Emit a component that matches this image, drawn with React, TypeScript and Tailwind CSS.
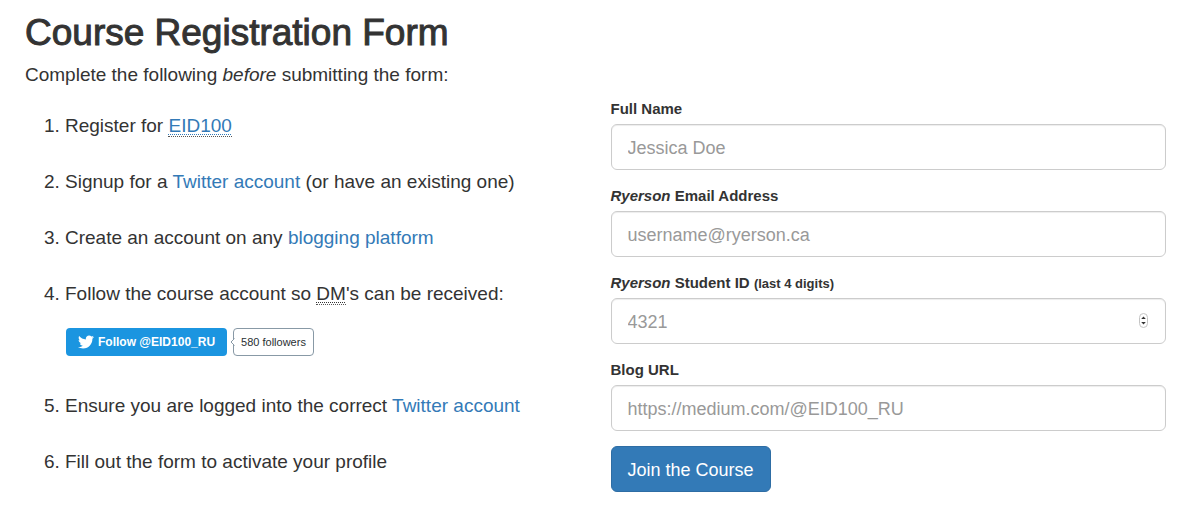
import type { ReactNode } from "react";
import { FaTwitter } from "react-icons/fa";

const linkClass = "text-[#337ab7] hover:underline";

function Abbr({ title, children }: { title: string; children: ReactNode }) {
  return (
    <abbr
      title={title}
      className="cursor-help border-b border-dotted border-[#555] underline decoration-dotted decoration-1 underline-offset-2"
    >
      {children}
    </abbr>
  );
}

interface FieldProps {
  id: string;
  label: ReactNode;
  type: string;
  placeholder: string;
}

function Field({ id, label, type, placeholder }: FieldProps) {
  return (
    <div className="flex flex-col">
      <label htmlFor={id} className="mb-[5px] text-[15px] leading-[21px] font-bold">
        {label}
      </label>
      <div className="relative">
        <input
          id={id}
          type={type}
          placeholder={placeholder}
          className="block h-[46px] w-full appearance-none rounded-md border border-[#ccc] bg-white px-4 pt-[2px] text-[18px] text-[#555] shadow-[inset_0_1px_1px_rgba(0,0,0,0.075)] outline-none [appearance:textfield] placeholder:text-[#999] focus:border-[#66afe9] [&::-webkit-inner-spin-button]:appearance-none"
        />
        {type === "number" && (
          <svg
            aria-hidden="true"
            viewBox="0 0 9 15"
            className="pointer-events-none absolute top-[15px] right-[18px] h-[15px] w-[9px]"
          >
            <rect x="0.5" y="0.5" width="8" height="14" rx="4" fill="#fff" stroke="#c4c4c4" />
            <path d="M2.2 6 4.5 3.4 6.8 6ZM2.2 9 4.5 11.6 6.8 9Z" fill="#333" />
          </svg>
        )}
      </div>
    </div>
  );
}

function FollowButton() {
  return (
    <div className="flex items-center pl-px">
      <a
        href="#follow"
        className="flex h-7 items-center gap-1 rounded bg-[#1b95e0] px-3 text-[12px] font-bold text-white"
      >
        <FaTwitter className="size-4" aria-hidden="true" />
        Follow @EID100_RU
      </a>
      <a
        href="#followers"
        className="relative ml-[6px] flex h-7 items-center rounded border border-[#8899a6] bg-white px-[7px] text-[11px] text-[#292f33]"
      >
        <svg
          aria-hidden="true"
          viewBox="0 0 5 8"
          className="absolute top-[9px] -left-1 h-2 w-[5px]"
        >
          <path d="M5 0 1 4 5 8Z" fill="#fff" />
          <path d="M4.5 0.5 1 4 4.5 7.5" fill="none" stroke="#8899a6" />
        </svg>
        580 followers
      </a>
    </div>
  );
}

export default function App() {
  return (
    <main className="bg-white pt-[13px] pr-[19px] pb-6 pl-[25px] font-['Liberation_Sans',Arial,sans-serif] text-[19px] leading-7 text-[#333]">
      <h1 className="text-[37px] leading-10 [-webkit-text-stroke:1px_#333]">
        Course Registration Form
      </h1>
      <p className="mt-2">
        Complete the following <em>before</em> submitting the form:
      </p>
      <div className="mt-[9px] grid grid-cols-2 gap-x-[30px]">
        <ol className="flex list-decimal flex-col gap-7 pt-[14px] pl-10">
          <li>
            Register for{" "}
            <a href="#eid100" className="text-[#337ab7]">
              <Abbr title="Course EID100">EID100</Abbr>
            </a>
          </li>
          <li>
            Signup for a{" "}
            <a href="#twitter-signup" className={linkClass}>
              Twitter account
            </a>{" "}
            (or have an existing one)
          </li>
          <li>
            Create an account on any{" "}
            <a href="#blogging" className={linkClass}>
              blogging platform
            </a>
          </li>
          <li>
            Follow the course account so <Abbr title="Direct Message">DM</Abbr>'s can be received:
            <div className="pt-5 pb-2">
              <FollowButton />
            </div>
          </li>
          <li>
            Ensure you are logged into the correct{" "}
            <a href="#twitter" className={linkClass}>
              Twitter account
            </a>
          </li>
          <li>Fill out the form to activate your profile</li>
        </ol>
        <form className="flex flex-col gap-[15px]">
          <Field id="name" type="text" label="Full Name" placeholder="Jessica Doe" />
          <Field
            id="email"
            type="email"
            label={
              <>
                <em>Ryerson</em> Email Address
              </>
            }
            placeholder="username@ryerson.ca"
          />
          <Field
            id="student-id"
            type="number"
            label={
              <>
                <em>Ryerson</em> Student ID{" "}
                <small className="text-[13px] leading-none">(last 4 digits)</small>
              </>
            }
            placeholder="4321"
          />
          <Field id="blog" type="url" label="Blog URL" placeholder="https://medium.com/@EID100_RU" />
          <button
            type="button"
            className="h-[46px] cursor-pointer self-start rounded-md border border-[#2e6da4] bg-[#337ab7] px-4 pt-[2px] text-[18px] text-white"
          >
            Join the Course
          </button>
        </form>
      </div>
    </main>
  );
}
